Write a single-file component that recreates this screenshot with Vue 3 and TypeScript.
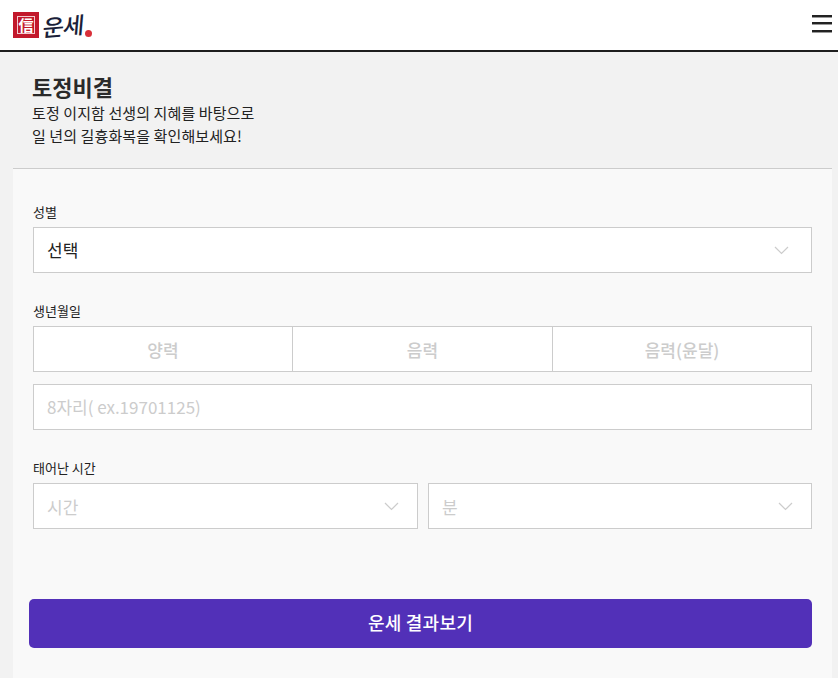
<script setup lang="ts">
const tabs: string[] = ['양력', '음력', '음력(윤달)']
</script>

<template>
  <div class="page">
    <header class="topbar">
      <div class="logo">
        <span class="seal"><span class="seal-inner">信</span></span>
        <span class="brand">운세</span>
        <span class="dot"></span>
      </div>
      <div class="burger"><i></i><i></i><i></i></div>
    </header>
    <main class="wrap">
      <section class="intro">
        <h1>토정비결</h1>
        <p>토정 이지함 선생의 지혜를 바탕으로<br />일 년의 길흉화복을 확인해보세요!</p>
      </section>
      <section class="form">
        <div class="field first">
          <label>성별</label>
          <div class="box select filled">
            <span>선택</span>
            <svg class="chev" width="15" height="9" viewBox="0 0 15 9"><path d="M1 1l6.5 6.5L14 1" /></svg>
          </div>
        </div>
        <div class="field second">
          <label>생년월일</label>
          <div class="tabs">
            <div v-for="t in tabs" :key="t" class="tab">{{ t }}</div>
          </div>
          <div class="box input">8자리( ex.19701125)</div>
        </div>
        <div class="field third">
          <label>태어난 시간</label>
          <div class="pair">
            <div class="box select">
              <span>시간</span>
              <svg class="chev" width="15" height="9" viewBox="0 0 15 9"><path d="M1 1l6.5 6.5L14 1" /></svg>
            </div>
            <div class="box select">
              <span>분</span>
              <svg class="chev" width="15" height="9" viewBox="0 0 15 9"><path d="M1 1l6.5 6.5L14 1" /></svg>
            </div>
          </div>
        </div>
        <button class="submit" type="button">운세 결과보기</button>
      </section>
    </main>
  </div>
</template>

<style>
html, body { margin: 0; background: #f2f2f2; }
</style>

<style scoped>
.page {
  width: 838px;
  height: 678px;
  overflow: hidden;
  background: #f2f2f2;
  font-family: "Noto Sans CJK KR", "Noto Sans", sans-serif;
  color: #222;
}
.topbar {
  height: 50px;
  background: #fff;
  border-bottom: 2px solid #1e1e1e;
  display: flex;
  align-items: center;
  justify-content: space-between;
  padding: 0 6px 0 13px;
}
.logo { display: flex; align-items: flex-start; height: 26px; margin-top: -1px; position: relative; width: 82px; }
.seal {
  width: 26px;
  height: 26px;
  background: #c2182b;
  display: flex;
  align-items: center;
  justify-content: center;
  box-sizing: border-box;
}
.seal-inner {
  width: 18px;
  height: 18px;
  outline: 1px solid #f3c9ce;
  outline-offset: -1px;
  color: #fff;
  font-size: 15px;
  line-height: 18px;
  font-weight: 700;
  text-align: center;
  font-family: "Noto Sans CJK KR", serif;
  display: block;
}
.brand {
  margin-left: 4px;
  font-size: 23px;
  line-height: 26px;
  letter-spacing: -1px;
  font-weight: 500;
  color: #1a1f3a;
  display: inline-block;
  transform: skewX(-10deg) rotate(-5deg);
  font-family: "Noto Sans CJK KR", sans-serif;
}
.dot {
  position: absolute;
  left: 72px;
  top: 18px;
  width: 7px;
  height: 7px;
  border-radius: 50%;
  background: #d9303a;
}
.burger { width: 20px; display: flex; flex-direction: column; gap: 5.5px; margin-top: -2px; transform: translateY(-1px); }
.burger i { display: block; height: 2px; background: #222; box-shadow: 0 1px 0 #999; }
.wrap { margin: 0 6px 0 13px; }
.intro {
  height: 117px;
  box-sizing: border-box;
  padding: 19px 20px 0 19px;
  border-bottom: 1px solid #ccc;
}
.intro h1 {
  margin: 0;
  font-size: 22px;
  line-height: 30px;
  font-weight: 700;
  color: #2a2a2a;
}
.intro p {
  margin: 0;
  font-size: 15px;
  line-height: 23px;
  letter-spacing: 0.1px;
  color: #222;
}
.form { background: #f9f9f9; padding: 0 20px 40px 16px; height: 510px; box-sizing: border-box; }
.field { padding-left: 4px; }
.first { padding-top: 34px; }
.second { padding-top: 29px; }
.third { padding-top: 29px; }
label {
  display: block;
  font-size: 13px;
  line-height: 18px;
  height: 24px;
  color: #222;
}
.box {
  height: 46px;
  box-sizing: border-box;
  background: #fff;
  border: 1px solid #ccc;
  padding: 0 13px;
  display: flex;
  align-items: center;
  font-size: 17px;
  color: #ccc;
}
.select { justify-content: space-between; padding-right: 22px; }
.filled span, .input { padding-bottom: 2px; }
.filled { color: #222; }
.chev { fill: none; stroke: #ccc; stroke-width: 1.2; flex: none; }
.tabs { display: grid; grid-template-columns: 258px 260px 1fr; height: 46px; box-sizing: border-box; background: #fff; border: 1px solid #ccc; }
.tab {
  display: flex;
  align-items: center;
  justify-content: center;
  font-size: 17px;
  font-weight: 500;
  color: #ccc;
  border-left: 1px solid #ccc;
}
.tab:first-child { border-left: 0; }
.input { margin-top: 12px; }
.pair { display: grid; grid-template-columns: 385px 384px; column-gap: 10px; }
.pair .select { padding-right: 18px; }
.submit {
  display: block;
  margin-top: 70px;
  width: 783px;
  height: 49px;
  border: 0;
  border-radius: 5px;
  background: #5230b8;
  color: #fff;
  font-family: inherit;
  font-size: 18px;
  font-weight: 500;
  padding: 0 0 3px;
  letter-spacing: 0.2px;
}
</style>
